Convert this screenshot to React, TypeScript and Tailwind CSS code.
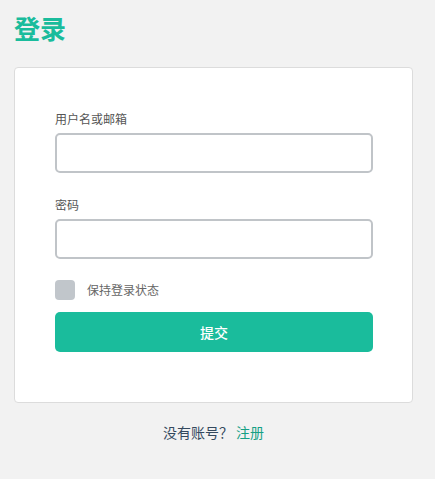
import React from "react";

export default function App() {
  const font = { fontFamily: '"Noto Sans CJK SC", "Noto Sans", sans-serif' };
  return (
    <div className="min-h-[479px] w-[435px] bg-[#f2f2f2] pt-[11px] pl-[14px]" style={font}>
      <h1 className="text-[26px] font-bold leading-[34px] text-[#1abc9c]">登录</h1>
      <div className="mt-[22px] w-[399px] rounded-[4px] border border-[#dcdcdc] bg-white px-[40px] pt-[43px] pb-[50px]">
        <label className="block text-[12px] leading-[16px] text-[#555]">用户名或邮箱</label>
        <input className="mt-[6px] block h-[40px] w-[318px] rounded-[5px] border-2 border-[#c0c4c8] bg-white outline-none" />
        <label className="mt-[24px] block text-[12px] leading-[16px] text-[#555]">密码</label>
        <input type="password" className="mt-[6px] block h-[40px] w-[318px] rounded-[5px] border-2 border-[#c0c4c8] bg-white outline-none" />
        <div className="mt-[21px] flex items-center">
          <div className="h-[20px] w-[20px] rounded-[4px] bg-[#c1c6cb]" />
          <span className="ml-[12px] text-[12px] leading-[16px] text-[#666]">保持登录状态</span>
        </div>
        <button className="mt-[12px] flex h-[40px] w-[318px] items-center justify-center rounded-[5px] bg-[#1abc9c] text-[14px] font-medium text-white">
          提交
        </button>
      </div>
      <div className="mt-[19px] w-[399px] text-center text-[14px] leading-[20px] text-[#34495e]">
        没有账号？ <span className="text-[#16a085]">注册</span>
      </div>
    </div>
  );
}
